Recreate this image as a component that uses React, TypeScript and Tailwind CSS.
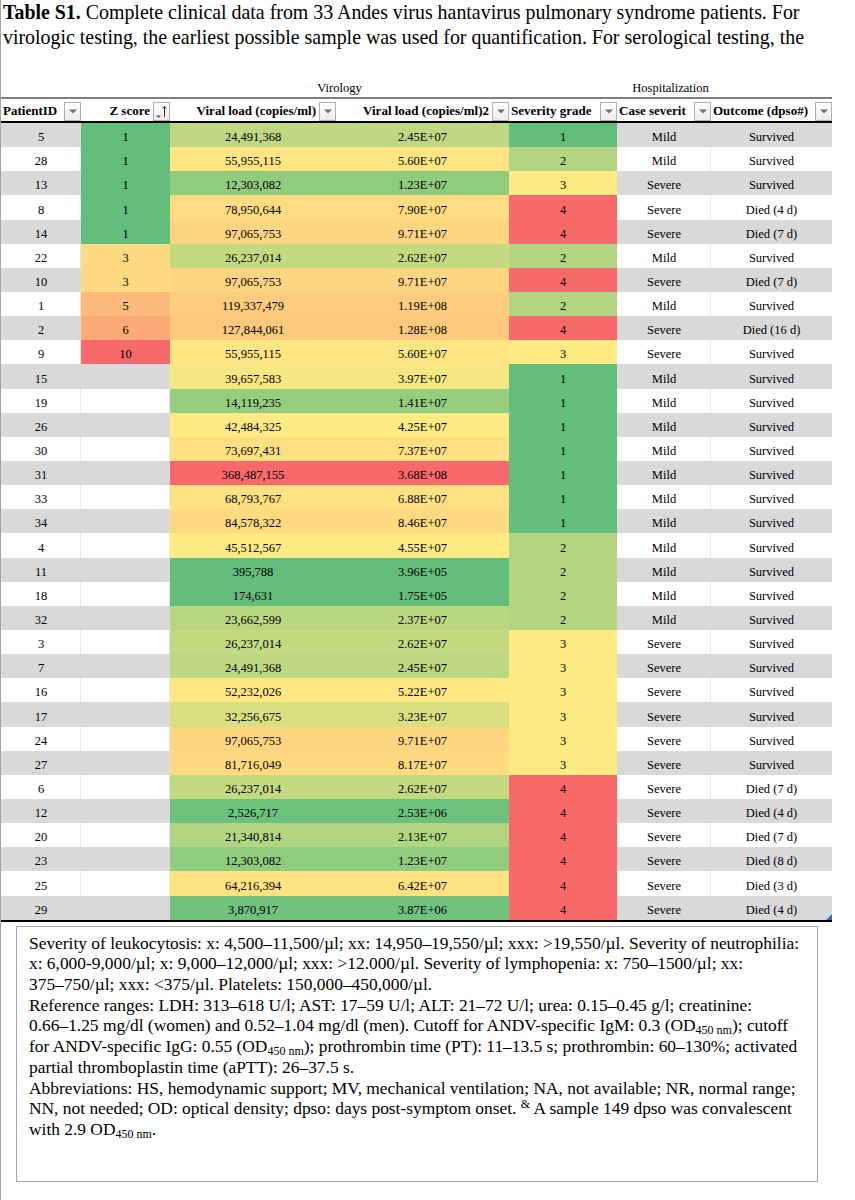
import React from 'react';

interface PatientRow {
  id: number;
  z?: number;
  load: number;
  grade: number;
  severity: string;
  outcome: string;
}

const rows: PatientRow[] = [
  { id: 5, z: 1, load: 24491368, grade: 1, severity: 'Mild', outcome: 'Survived' },
  { id: 28, z: 1, load: 55955115, grade: 2, severity: 'Mild', outcome: 'Survived' },
  { id: 13, z: 1, load: 12303082, grade: 3, severity: 'Severe', outcome: 'Survived' },
  { id: 8, z: 1, load: 78950644, grade: 4, severity: 'Severe', outcome: 'Died (4 d)' },
  { id: 14, z: 1, load: 97065753, grade: 4, severity: 'Severe', outcome: 'Died (7 d)' },
  { id: 22, z: 3, load: 26237014, grade: 2, severity: 'Mild', outcome: 'Survived' },
  { id: 10, z: 3, load: 97065753, grade: 4, severity: 'Severe', outcome: 'Died (7 d)' },
  { id: 1, z: 5, load: 119337479, grade: 2, severity: 'Mild', outcome: 'Survived' },
  { id: 2, z: 6, load: 127844061, grade: 4, severity: 'Severe', outcome: 'Died (16 d)' },
  { id: 9, z: 10, load: 55955115, grade: 3, severity: 'Severe', outcome: 'Survived' },
  { id: 15, load: 39657583, grade: 1, severity: 'Mild', outcome: 'Survived' },
  { id: 19, load: 14119235, grade: 1, severity: 'Mild', outcome: 'Survived' },
  { id: 26, load: 42484325, grade: 1, severity: 'Mild', outcome: 'Survived' },
  { id: 30, load: 73697431, grade: 1, severity: 'Mild', outcome: 'Survived' },
  { id: 31, load: 368487155, grade: 1, severity: 'Mild', outcome: 'Survived' },
  { id: 33, load: 68793767, grade: 1, severity: 'Mild', outcome: 'Survived' },
  { id: 34, load: 84578322, grade: 1, severity: 'Mild', outcome: 'Survived' },
  { id: 4, load: 45512567, grade: 2, severity: 'Mild', outcome: 'Survived' },
  { id: 11, load: 395788, grade: 2, severity: 'Mild', outcome: 'Survived' },
  { id: 18, load: 174631, grade: 2, severity: 'Mild', outcome: 'Survived' },
  { id: 32, load: 23662599, grade: 2, severity: 'Mild', outcome: 'Survived' },
  { id: 3, load: 26237014, grade: 3, severity: 'Severe', outcome: 'Survived' },
  { id: 7, load: 24491368, grade: 3, severity: 'Severe', outcome: 'Survived' },
  { id: 16, load: 52232026, grade: 3, severity: 'Severe', outcome: 'Survived' },
  { id: 17, load: 32256675, grade: 3, severity: 'Severe', outcome: 'Survived' },
  { id: 24, load: 97065753, grade: 3, severity: 'Severe', outcome: 'Survived' },
  { id: 27, load: 81716049, grade: 3, severity: 'Severe', outcome: 'Survived' },
  { id: 6, load: 26237014, grade: 4, severity: 'Severe', outcome: 'Died (7 d)' },
  { id: 12, load: 2526717, grade: 4, severity: 'Severe', outcome: 'Died (4 d)' },
  { id: 20, load: 21340814, grade: 4, severity: 'Severe', outcome: 'Died (7 d)' },
  { id: 23, load: 12303082, grade: 4, severity: 'Severe', outcome: 'Died (8 d)' },
  { id: 25, load: 64216394, grade: 4, severity: 'Severe', outcome: 'Died (3 d)' },
  { id: 29, load: 3870917, grade: 4, severity: 'Severe', outcome: 'Died (4 d)' },
];

// excel-style 3 colour scale: min green, median yellow, max red
const GREEN = [99, 190, 123];
const YELLOW = [255, 235, 132];
const RED = [248, 105, 107];

function median(values: number[]) {
  const s = [...values].sort((a, b) => a - b);
  const m = Math.floor(s.length / 2);
  return s.length % 2 ? s[m] : (s[m - 1] + s[m]) / 2;
}

function colorScale(values: number[]) {
  const min = Math.min(...values);
  const max = Math.max(...values);
  const mid = median(values);
  return (v: number) => {
    const [from, to, t] =
      v <= mid
        ? [GREEN, YELLOW, mid === min ? 1 : (v - min) / (mid - min)]
        : [YELLOW, RED, (v - mid) / (max - mid)];
    const c = from.map((f, i) => Math.round(f + (to[i] - f) * t));
    return `rgb(${c[0]}, ${c[1]}, ${c[2]})`;
  };
}

const loadColor = colorScale(rows.map((r) => r.load));
const zColor = colorScale(rows.filter((r) => r.z !== undefined).map((r) => r.z as number));
const gradeColor = colorScale(rows.map((r) => r.grade));

function sci(v: number) {
  const [m, e] = v.toExponential(2).split('e');
  const n = Math.abs(Number(e));
  return `${m}E${e.startsWith('-') ? '-' : '+'}${n < 10 ? '0' + n : n}`;
}

function FilterButton({ sorted }: { sorted?: boolean }) {
  return (
    <span className="flex h-[19px] w-[17px] shrink-0 items-center justify-center border border-[#b0b0b0] bg-linear-to-b from-white to-[#ebebeb]">
      {sorted ? (
        <svg width="13" height="15" viewBox="0 0 13 15">
          <path d="M1 11.5h5l-2.5 2.5z" fill="#5a5a5a" />
          <path d="M9.5 13V2.5M7.8 4.6l1.7-2.2 1.7 2.2" stroke="#333" strokeWidth="1" fill="none" />
        </svg>
      ) : (
        <svg width="8" height="5" viewBox="0 0 8 5">
          <path d="M0 0.5h8L4 4.5z" fill="#707070" />
        </svg>
      )}
    </span>
  );
}

const headers: { label: string; cls: string; sorted?: boolean }[] = [
  { label: 'PatientID', cls: 'flex-1 pl-[2px] text-left' },
  { label: 'Z score', cls: 'flex-1 pr-[3px] text-right', sorted: true },
  { label: 'Viral load (copies/ml)', cls: 'flex-1 pr-[3px] text-right' },
  { label: 'Viral load (copies/ml)2', cls: 'flex-1 pr-[3px] text-right' },
  { label: 'Severity grade', cls: 'flex-1 pl-[2px] text-left' },
  // the cell is too narrow for its label, excel clips it
  { label: 'Case severity', cls: 'w-[69px] pl-[2px] text-left' },
  { label: 'Outcome (dpso#)', cls: 'flex-1 pl-[2px] text-left' },
];

const cols = 'grid grid-cols-[80px_89px_166px_173px_108px_94px_121px]';

export default function App() {
  return (
    <div className="min-h-[1200px] w-[855px] border-l border-[#a3a3a3] bg-white font-['Liberation_Serif',serif] text-black">
      <p className="pl-[2px] text-[19.9px] leading-[25px] whitespace-nowrap">
        <b>Table S1.</b> Complete clinical data from 33 Andes virus hantavirus pulmonary syndrome patients. For
        <br />
        virologic testing, the earliest possible sample was used for quantification. For serological testing, the
      </p>

      <div className={`${cols} mt-[29px] h-[18px] text-[12.5px] leading-[18px]`}>
        <div className="col-span-2" />
        <div className="col-span-2 text-center">Virology</div>
        <div className="col-span-3 text-center">Hospitalization</div>
      </div>

      <div className="relative w-[831px]">
        <div className={`${cols} h-[26px] border-t-2 border-b-2 border-t-[#7f7f7f] border-b-black text-[13px] font-bold`}>
          {headers.map((h) => (
            <div key={h.label} className="flex items-center justify-between overflow-hidden">
              <span className={`overflow-hidden pt-[2px] whitespace-nowrap ${h.cls}`}>{h.label}</span>
              <span className="self-end">
                <FilterButton sorted={h.sorted} />
              </span>
            </div>
          ))}
        </div>

        <div className="border-b-2 border-black text-[12.5px]">
          {rows.map((r, i) => {
            const band = i % 2 === 0 ? 'bg-[#d9d9d9]' : 'bg-white shadow-[inset_-1px_0_0_#e8e8e8]';
            const cell = 'flex items-center justify-center pt-[5px]';
            return (
              <div key={r.id} className={`${cols} h-[24.15px]`}>
                <div className={`${cell} ${band}`}>{r.id}</div>
                {r.z !== undefined ? (
                  <div className={cell} style={{ backgroundColor: zColor(r.z) }}>
                    {r.z}
                  </div>
                ) : (
                  <div className={band} />
                )}
                <div className={cell} style={{ backgroundColor: loadColor(r.load) }}>
                  {r.load.toLocaleString('en-US')}
                </div>
                <div className={cell} style={{ backgroundColor: loadColor(r.load) }}>
                  {sci(r.load)}
                </div>
                <div className={cell} style={{ backgroundColor: gradeColor(r.grade) }}>
                  {r.grade}
                </div>
                <div className={`${cell} ${band}`}>{r.severity}</div>
                <div className={`${cell} ${i % 2 === 0 ? 'bg-[#d9d9d9]' : 'bg-white'}`}>{r.outcome}</div>
              </div>
            );
          })}
        </div>

        <svg className="absolute right-0 bottom-[2px]" width="6" height="6" viewBox="0 0 6 6">
          <path d="M6 0v6H0z" fill="#3a6fc4" />
        </svg>
      </div>

      <div className="mt-[4px] ml-[15px] h-[256px] w-[802px] border border-[#a6a6a6] pt-[6px] pl-[12px] text-[17.4px] leading-[20.7px] whitespace-nowrap">
        <p>
          Severity of leukocytosis: x: 4,500–11,500/µl; xx: 14,950–19,550/µl; xxx: &gt;19,550/µl. Severity of neutrophilia:
          <br />
          x: 6,000-9,000/µl; x: 9,000–12,000/µl; xxx: &gt;12.000/µl. Severity of lymphopenia: x: 750–1500/µl; xx:
          <br />
          375–750/µl; xxx: &lt;375/µl. Platelets: 150,000–450,000/µl.
        </p>
        <p>
          Reference ranges: LDH: 313–618 U/l; AST: 17–59 U/l; ALT: 21–72 U/l; urea: 0.15–0.45 g/l; creatinine:
          <br />
          0.66–1.25 mg/dl (women) and 0.52–1.04 mg/dl (men). Cutoff for ANDV-specific IgM: 0.3 (OD
          <sub className="text-[12px]">450 nm</sub>); cutoff
          <br />
          for ANDV-specific IgG: 0.55 (OD<sub className="text-[12px]">450 nm</sub>); prothrombin time (PT): 11–13.5 s;
          prothrombin: 60–130%; activated
          <br />
          partial thromboplastin time (aPTT): 26–37.5 s.
        </p>
        <p>
          Abbreviations: HS, hemodynamic support; MV, mechanical ventilation; NA, not available; NR, normal range;
          <br />
          NN, not needed; OD: optical density; dpso: days post-symptom onset. <sup className="text-[12px]">&amp;</sup> A
          sample 149 dpso was convalescent
          <br />
          with 2.9 OD<sub className="text-[12px]">450 nm</sub>.
        </p>
      </div>
    </div>
  );
}
